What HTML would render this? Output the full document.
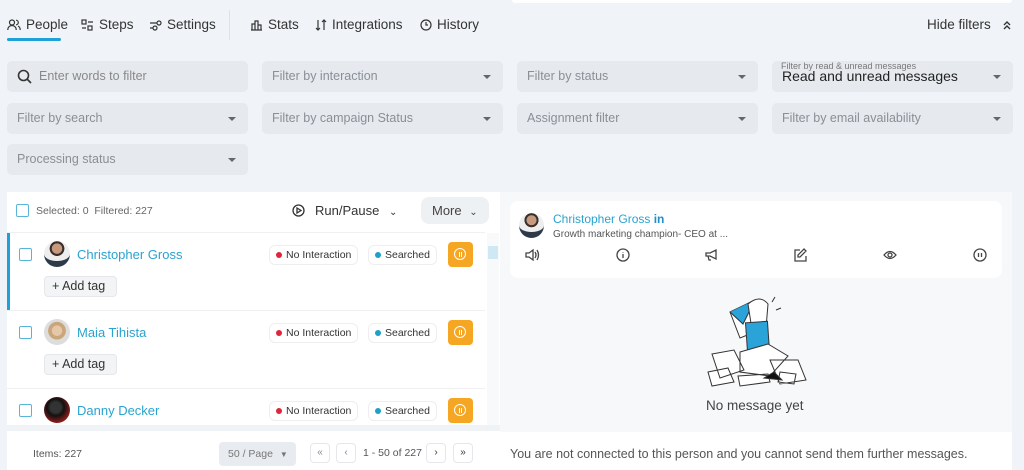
<!DOCTYPE html>
<html><head><style>
*{box-sizing:border-box;margin:0;padding:0}
body{width:1024px;height:470px;background:#f0f4f8;font-family:"Liberation Sans",sans-serif;position:relative;overflow:hidden;color:#333}
.a{position:absolute}
.tab{position:absolute;top:17px;font-size:13.5px;color:#333;display:flex;align-items:center;gap:5px}
.f{position:absolute;height:31px;background:#e6eaef;border-radius:5px;font-size:12.5px;color:#8a8f96;padding-left:10px;line-height:31px}
.f .c{position:absolute;right:12px;top:14px;border:4px solid transparent;border-top:4px solid #666;border-bottom:0}
.cb{position:absolute;width:13px;height:13px;border:1.5px solid #5ab4d8;border-radius:2px;background:#fff}
.pill{position:absolute;height:20px;border:1px solid #eee;border-radius:6px;font-size:10.5px;line-height:18px;padding:0 6px;color:#333;background:#fff}
.dot{display:inline-block;width:6px;height:6px;border-radius:50%;margin-right:4px;vertical-align:0}
.ob{position:absolute;width:25px;height:25px;background:#f5a623;border-radius:4px}
.ob:after{content:"";position:absolute;left:6px;top:6px;width:10px;height:10px;border:1.5px solid #fff;border-radius:50%}
.ob:before{content:"";position:absolute;left:11px;top:10px;width:2px;height:5px;border-left:1px solid #fff;border-right:1px solid #fff;box-sizing:content-box;width:1px}
.name{position:absolute;font-size:13px;color:#2aa3cf}
.av{position:absolute;width:26px;height:26px;border-radius:50%}
.tag{position:absolute;height:21px;width:73px;background:#f2f4f6;border:1px solid #e5e7ea;border-radius:4px;font-size:12.5px;line-height:19px;padding-left:7px;color:#333}
.pg{position:absolute;top:443px;width:20px;height:20px;border:1px solid #e5e7ea;border-radius:4px;font-size:10px;text-align:center;line-height:18px;color:#888;background:#fff}
</style></head><body>
<div class="a" style="left:512px;top:0;width:500px;height:3px;background:#fff;border-radius:0 0 6px 6px"></div>
<div class="tab" style="left:7px"><svg width="14" height="12" viewBox="0 0 14 12" fill="none" stroke="#333" stroke-width="1.2"><circle cx="5" cy="3.5" r="2.5"/><path d="M0.8 11c0-3 2-4.5 4.2-4.5S9.2 8 9.2 11M9 1.2a2.3 2.3 0 010 4.6M11 7c1.4.6 2.2 2 2.2 4"/></svg>People</div>
<div class="a" style="left:7px;top:38px;width:54px;height:3px;background:#1ea0d8;border-radius:2px"></div>
<div class="tab" style="left:81px"><svg width="13" height="12" fill="none" stroke="#333" stroke-width="1.2"><rect x="1" y="1" width="4" height="4"/><rect x="7" y="7" width="4" height="4"/><path d="M7 3h5M1 9h4"/></svg>Steps</div>
<div class="tab" style="left:149px"><svg width="13" height="12" fill="none" stroke="#333" stroke-width="1.2"><path d="M1 4h7M1 9h3"/><circle cx="10" cy="4" r="2"/><circle cx="6" cy="9" r="2"/></svg>Settings</div>
<div class="a" style="left:229px;top:10px;width:1px;height:30px;background:#dde2e7"></div>
<div class="tab" style="left:250px"><svg width="13" height="12" fill="none" stroke="#333" stroke-width="1.2"><path d="M1 11h11M2 11V5h3v6M5 11V2h3v9M8 11V6h3v5"/></svg>Stats</div>
<div class="tab" style="left:315px"><svg width="12" height="12" fill="none" stroke="#333" stroke-width="1.2"><path d="M3 1v10M1 9l2 2 2-2M9 11V1M7 3l2-2 2 2"/></svg>Integrations</div>
<div class="tab" style="left:420px"><svg width="12" height="12" fill="none" stroke="#333" stroke-width="1.2"><circle cx="6" cy="6" r="5"/><path d="M6 3v3h2"/></svg>History</div>
<div class="tab" style="left:927px">Hide filters <svg style="margin-left:6px" width="10" height="10" fill="none" stroke="#333" stroke-width="1.4"><path d="M2 5l3-3 3 3M2 9l3-3 3 3"/></svg></div>

<div class="f" style="left:7px;top:61px;width:241px;color:#888;padding-left:32px"><svg class="a" style="left:10px;top:8px" width="15" height="15" fill="none" stroke="#333" stroke-width="1.6"><circle cx="6.5" cy="6.5" r="5"/><path d="M10 10l4 4"/></svg>Enter words to filter</div>
<div class="f" style="left:262px;top:61px;width:241px">Filter by interaction<i class="c"></i></div>
<div class="f" style="left:517px;top:61px;width:241px">Filter by status<i class="c"></i></div>
<div class="f" style="left:772px;top:61px;width:241px;color:#222;font-size:14px;line-height:30px"><span class="a" style="left:9px;top:-10px;font-size:9px;color:#777">Filter by read &amp; unread messages</span>Read and unread messages<i class="c"></i></div>
<div class="f" style="left:7px;top:103px;width:241px">Filter by search<i class="c"></i></div>
<div class="f" style="left:262px;top:103px;width:241px">Filter by campaign Status<i class="c"></i></div>
<div class="f" style="left:517px;top:103px;width:241px">Assignment filter<i class="c"></i></div>
<div class="f" style="left:772px;top:103px;width:241px">Filter by email availability<i class="c"></i></div>
<div class="f" style="left:7px;top:144px;width:241px">Processing status<i class="c"></i></div>

<div class="a" style="left:7px;top:192px;width:493px;height:278px;background:#fff"></div>
<div class="a" style="left:7px;top:232px;width:478px;height:1px;background:#eef0f2"></div>
<div class="cb" style="left:16px;top:204px"></div>
<div class="a" style="left:36px;top:205px;font-size:10.5px;color:#666">Selected: 0 &nbsp;Filtered: 227</div>
<svg class="a" style="left:292px;top:204px" width="13" height="13" fill="none" stroke="#333" stroke-width="1.3"><circle cx="6.5" cy="6.5" r="5.5"/><path d="M5 4v5l4-2.5z"/></svg>
<div class="a" style="left:315px;top:203px;font-size:13px;color:#333">Run/Pause <span style="font-size:10px;margin-left:6px">⌄</span></div>
<div class="a" style="left:421px;top:197px;width:68px;height:27px;background:#eef1f4;border-radius:8px;font-size:13px;line-height:27px;padding-left:11px;color:#444">More <span style="font-size:10px;margin-left:4px">⌄</span></div>

<div class="a" style="left:7px;top:233px;width:3px;height:77px;background:#1ea0d8"></div>
<div class="a" style="left:7px;top:310px;width:478px;height:1px;background:#eef0f2"></div>
<div class="a" style="left:7px;top:388px;width:478px;height:1px;background:#eef0f2"></div>
<div class="a" style="left:487px;top:233px;width:12px;height:192px;background:#f7f9fb"></div>
<div class="a" style="left:488px;top:246px;width:10px;height:13px;background:#cfe8f4"></div>

<div class="cb" style="left:19px;top:248px"></div>
<div class="av" style="left:44px;top:241px;background:radial-gradient(circle at 50% 38%,#c79a7f 0 28%,#3b2f2a 30% 40%,#eee 42%),#fff;border-bottom:6px solid #2d3a4a"></div>
<div class="name" style="left:77px;top:247px">Christopher Gross</div>
<div class="pill" style="left:269px;top:245px"><span class="dot" style="background:#e0243c"></span>No Interaction</div>
<div class="pill" style="left:368px;top:245px"><span class="dot" style="background:#1ea0c8"></span>Searched</div>
<div class="ob" style="left:448px;top:242px"></div>
<div class="tag" style="left:44px;top:276px">+ Add tag</div>

<div class="cb" style="left:19px;top:326px"></div>
<div class="av" style="left:44px;top:319px;background:radial-gradient(circle at 50% 45%,#e6c7a8 0 26%,#c9a77a 28% 45%,#ddd 47%)"></div>
<div class="name" style="left:77px;top:325px">Maia Tihista</div>
<div class="pill" style="left:269px;top:323px"><span class="dot" style="background:#e0243c"></span>No Interaction</div>
<div class="pill" style="left:368px;top:323px"><span class="dot" style="background:#1ea0c8"></span>Searched</div>
<div class="ob" style="left:448px;top:320px"></div>
<div class="tag" style="left:44px;top:354px">+ Add tag</div>

<div class="cb" style="left:19px;top:404px"></div>
<div class="av" style="left:44px;top:397px;background:radial-gradient(circle at 45% 40%,#333 0 25%,#111 40%,#8b1a1a 70%)"></div>
<div class="name" style="left:77px;top:403px">Danny Decker</div>
<div class="pill" style="left:269px;top:401px"><span class="dot" style="background:#e0243c"></span>No Interaction</div>
<div class="pill" style="left:368px;top:401px"><span class="dot" style="background:#1ea0c8"></span>Searched</div>
<div class="ob" style="left:448px;top:398px"></div>

<div class="a" style="left:7px;top:425px;width:493px;height:6px;background:#f0f3f6"></div>
<div class="a" style="left:33px;top:448px;font-size:10.5px;color:#555">Items: 227</div>
<div class="a" style="left:219px;top:442px;width:77px;height:24px;background:#e8ecf0;border-radius:4px;font-size:10.5px;line-height:24px;padding-left:9px;color:#777">50 / Page <span style="font-size:8px;margin-left:4px">▼</span></div>
<div class="pg" style="left:310px">«</div>
<div class="pg" style="left:336px">‹</div>
<div class="a" style="left:363px;top:447px;font-size:10.5px;color:#555">1 - 50 of 227</div>
<div class="pg" style="left:426px;color:#333">›</div>
<div class="pg" style="left:453px;color:#333">»</div>

<div class="a" style="left:500px;top:192px;width:512px;height:240px;background:#f6f8fa"></div>
<div class="a" style="left:510px;top:201px;width:492px;height:77px;background:#fff;border-radius:8px"></div>
<div class="av" style="left:519px;top:213px;width:25px;height:25px;background:radial-gradient(circle at 50% 38%,#c79a7f 0 28%,#3b2f2a 30% 40%,#eee 42%);border-bottom:6px solid #2d3a4a"></div>
<div class="a" style="left:553px;top:212px;font-size:12px;color:#2aa3cf">Christopher Gross <b style="color:#1e8fc8">in</b></div>
<div class="a" style="left:553px;top:229px;font-size:10px;color:#555">Growth marketing champion- CEO at ...</div>
<svg class="a" style="left:525px;top:248px" width="470" height="16" fill="none" stroke="#444" stroke-width="1.3">
<path d="M1 5h3l4-3v10L4 9H1zM10 4q2 3 0 6M12 2q3 5 0 10"/>
<g transform="translate(91,0)"><circle cx="7" cy="7" r="6"/><path d="M7 6v4M7 4v.5"/></g>
<g transform="translate(180,0)"><path d="M1 5h4l6-3v9L5 8H1zM3 8l1 4h2"/></g>
<g transform="translate(268,0)"><path d="M7 2H2v11h11V8M11 1l2 2-6 6H5V7z"/></g>
<g transform="translate(358,0)"><path d="M1 7q6-7 12 0q-6 7-12 0z"/><circle cx="7" cy="7" r="2"/></g>
<g transform="translate(448,0)"><circle cx="7" cy="7" r="6"/><path d="M5.5 5v4M8.5 5v4"/></g>
</svg>
<svg class="a" style="left:700px;top:292px" width="110" height="100" fill="#fff" stroke="#333" stroke-width="1">
<path d="M30 20l25-12 10 28-25 10z"/><path d="M30 20l13 12 12-24" fill="#2aa3d8"/>
<path d="M48 12q12-10 20 0l-2 24-14 2z"/>
<rect x="47" y="30" width="22" height="42" fill="#2aa3d8" transform="rotate(-4 58 52)"/>
<path d="M72 10l3-5M76 18l5-2"/>
<path d="M12 62l22-4 10 20-24 8zM40 60l28-8 20 12-18 20-30-4zM70 68l28 0 8 20-26 4zM8 80l20-4 6 14-22 4zM38 84l30-2 2 8-30 4zM80 80l16 2-2 10-16-2z"/>
<path d="M64 86l10-6 8 8z" fill="#111"/>
</svg>
<div class="a" style="left:706px;top:398px;font-size:13.5px;color:#444">No message yet</div>
<div class="a" style="left:500px;top:432px;width:512px;height:38px;background:#fff"></div>
<div class="a" style="left:510px;top:447px;font-size:12.5px;color:#555">You are not connected to this person and you cannot send them further messages.</div>
</body></html>
